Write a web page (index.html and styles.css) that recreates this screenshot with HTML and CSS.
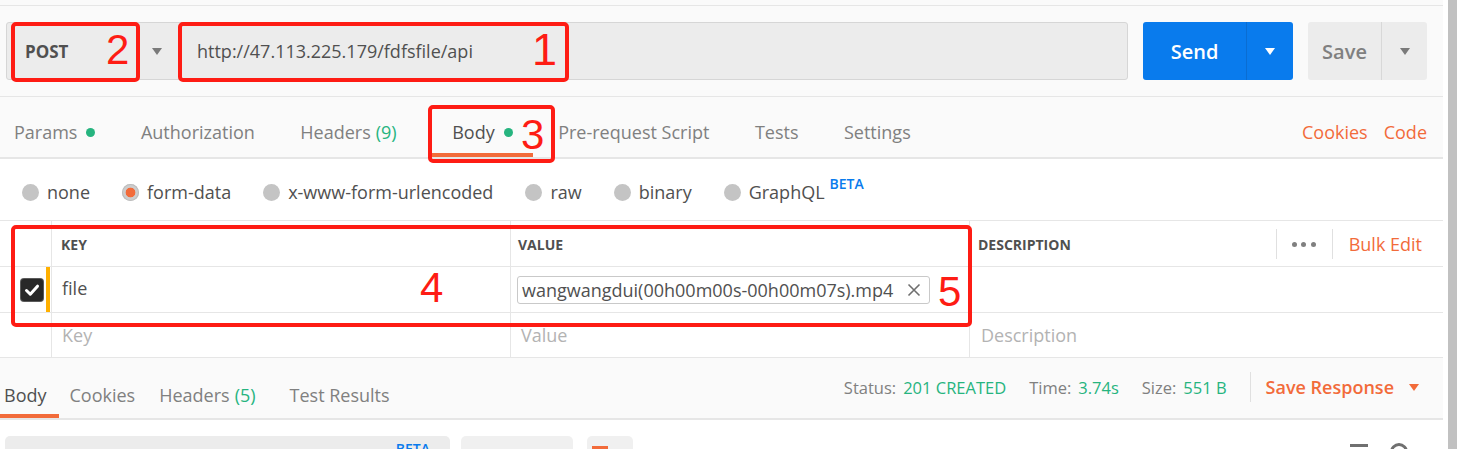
FILE: index.html
```html
<!DOCTYPE html>
<html>
<head>
<meta charset="utf-8">
<link rel="stylesheet" href="styles.css">
</head>
<body>
<div class="page">
  <div class="main">
    <div class="topgap"></div>
    <div class="reqbar">
      <div class="urlgroup">
        <div class="method"><span class="method-name">POST</span><span class="caret caret-gray"></span></div>
        <div class="url">http://47.113.225.179/fdfsfile/api</div>
      </div>
      <div class="send"><span class="send-label">Send</span><span class="send-drop"><span class="caret caret-white"></span></span></div>
      <div class="save"><span class="save-label">Save</span><span class="save-drop"><span class="caret caret-gray"></span></span></div>
    </div>

    <div class="tabs">
      <span class="tab">Params<i class="dot"></i></span>
      <span class="tab">Authorization</span>
      <span class="tab">Headers <span class="count">(9)</span></span>
      <span class="tab active">Body<i class="dot"></i></span>
      <span class="tab">Pre-request Script</span>
      <span class="tab">Tests</span>
      <span class="tab">Settings</span>
      <span class="tab-links"><span class="link">Cookies</span><span class="link">Code</span></span>
    </div>

    <div class="bodytypes">
      <span class="opt"><i class="radio"></i>none</span>
      <span class="opt"><i class="radio selected"></i>form-data</span>
      <span class="opt"><i class="radio"></i>x-www-form-urlencoded</span>
      <span class="opt"><i class="radio"></i>raw</span>
      <span class="opt"><i class="radio"></i>binary</span>
      <span class="opt"><i class="radio"></i>GraphQL<sup class="beta">BETA</sup></span>
    </div>

    <div class="grid head">
      <div class="cell c0"></div>
      <div class="cell c1 hd">KEY</div>
      <div class="cell c2 hd">VALUE</div>
      <div class="cell c3 hd">DESCRIPTION
        <span class="hd-tools">
          <span class="vdiv"></span>
          <span class="more"><i></i><i></i><i></i></span>
          <span class="vdiv"></span>
          <span class="bulk">Bulk Edit</span>
        </span>
      </div>
    </div>
    <div class="grid row">
      <div class="cell c0">
        <span class="check"><svg width="22" height="22" viewBox="0 0 22 22"><path d="M5.5 11.5 L9.3 15.2 L16.5 7.2" fill="none" stroke="#fff" stroke-width="3" stroke-linecap="round" stroke-linejoin="round"/></svg></span>
        <span class="flag"></span>
      </div>
      <div class="cell c1 val">file</div>
      <div class="cell c2">
        <span class="chip"><span class="chip-text">wangwangdui(00h00m00s-00h00m07s).mp4</span>
          <svg class="chip-x" width="14" height="14" viewBox="0 0 14 14"><path d="M1.5 1.5 L12.5 12.5 M12.5 1.5 L1.5 12.5" stroke="#6f6f6f" stroke-width="1.6" fill="none"/></svg>
        </span>
      </div>
      <div class="cell c3"></div>
    </div>
    <div class="grid row">
      <div class="cell c0"></div>
      <div class="cell c1 ph">Key</div>
      <div class="cell c2 ph">Value</div>
      <div class="cell c3 ph">Description</div>
    </div>

    <div class="restabs">
      <div class="rtabs">
        <span class="rtab active">Body</span>
        <span class="rtab rt-cookies">Cookies</span>
        <span class="rtab rt-headers">Headers <span class="count">(5)</span></span>
        <span class="rtab rt-tests">Test Results</span>
      </div>
      <div class="rstats">
        <span class="stat">Status:<b>201 CREATED</b></span>
        <span class="stat">Time:<b>3.74s</b></span>
        <span class="stat">Size:<b>551 B</b></span>
        <span class="rdiv"></span>
        <span class="saveresp">Save Response</span>
        <span class="caret caret-orange"></span>
      </div>
    </div>

    <div class="below">
      <div class="bx bx1"><span class="bx-beta">BETA</span></div>
      <div class="bx bx2"></div>
      <div class="bx bx3"><span class="bx-mark"></span></div>
      <div class="below-icons">
        <span class="ic-lines"></span>
        <span class="ic-circle"></span>
      </div>
    </div>
  </div>
  <div class="scrollbar"></div>

  <div class="anno a-box1"></div>
  <div class="anno a-box2"></div>
  <div class="anno a-box3"></div>
  <div class="anno a-box4"></div>
  <span class="num n1">1</span>
  <span class="num n2">2</span>
  <span class="num n3">3</span>
  <span class="num n4">4</span>
  <span class="num n5">5</span>
</div>
</body>
</html>
```

FILE: styles.css
```css
* { box-sizing: border-box; }
html, body { margin: 0; padding: 0; background: #fff; }
body {
  font-family: "Open Sans", "Noto Sans", sans-serif;
  color: #505050;
  overflow: hidden;
}
.page {
  position: relative;
  display: flex;
  width: 1461px;
  height: 449px;
  overflow: hidden;
}
.main { width: 1443px; flex: none; }
.scrollbar { width: 9px; margin-left: 5px; background: #c1c1c1; height: 449px; flex: none; }

/* request bar */
.topgap { height: 6px; background: #fafafa; border-bottom: 1px solid #e6e6e6; }
.reqbar {
  height: 91px;
  padding: 16px 0 0 6px;
  display: flex;
  align-items: flex-start;
  gap: 15px;
  background: #fafafa;
  border-bottom: 1px solid #e6e6e6;
}
.urlgroup {
  width: 1122px;
  height: 58px;
  display: flex;
  align-items: center;
  background: #ececec;
  border: 1px solid #d6d6d6;
  border-radius: 3px;
}
.method {
  width: 172px;
  height: 100%;
  display: flex;
  align-items: center;
  padding-left: 18px;
  padding-right: 17px;
}
.method-name { font-weight: 700; font-size: 17px; color: #505050; }
.method .caret { margin-left: auto; }
.url { padding-left: 18px; font-size: 18px; color: #505050; }

.caret {
  display: inline-block;
  width: 0; height: 0;
  border-left: 5.5px solid transparent;
  border-right: 5.5px solid transparent;
  border-top: 7px solid #7a7a7a;
}
.caret-white { border-top-color: #fff; }
.caret-orange { border-top-color: #f26b3a; }

.send {
  width: 150px; height: 58px;
  display: flex;
  background: #097bed;
  border-radius: 3px;
}
.send-label {
  width: 104px;
  display: flex; align-items: center; justify-content: center;
  color: #fff; font-weight: 600; font-size: 20px;
  border-right: 1px solid #0a6dd2;
}
.send-drop { flex: 1; display: flex; align-items: center; justify-content: center; }
.save {
  width: 119px; height: 58px;
  display: flex;
  background: #ececec;
  border-radius: 3px;
}
.save-label {
  width: 74px;
  display: flex; align-items: center; justify-content: center;
  color: #808080; font-weight: 600; font-size: 20px;
  border-right: 1px solid #d8d8d8;
}
.save-drop { flex: 1; display: flex; align-items: center; justify-content: center; }

/* tabs */
.tabs {
  height: 62px;
  display: flex;
  align-items: stretch;
  gap: 45.5px;
  padding: 0 16px 0 14px;
  background: #fafafa;
  border-bottom: 2px solid #e6e6e6;
  font-size: 18px;
  color: #808080;
}
.tab {
  position: relative;
  display: flex;
  align-items: center;
  padding-top: 10px;
}
.tab.active { color: #505050; margin-left: 10px; }
.tab.active::after {
  content: "";
  position: absolute;
  left: -20px; right: -20px; bottom: 0;
  height: 4px;
  background: #f26b3a;
}
.dot { display: inline-block; width: 9px; height: 9px; border-radius: 50%; background: #26b47f; margin-left: 9px; }
.count { color: #26b47f; margin-left: 5px; }
.tab-links { margin-left: auto; display: flex; align-items: center; gap: 16px; padding-top: 10px; color: #f26b3a; }

/* body types */
.bodytypes {
  height: 62px;
  display: flex;
  align-items: center;
  gap: 32px;
  padding: 5px 0 0 22px;
  border-bottom: 1px solid #e6e6e6;
  font-size: 18px;
  color: #505050;
}
.opt { display: flex; align-items: center; position: relative; }
.radio { display: inline-block; width: 17px; height: 17px; border-radius: 50%; background: #c4c4c4; margin-right: 8px; }
.radio.selected { background: radial-gradient(circle, #f26b3a 0 4.5px, #cdcdcd 5.2px); box-shadow: inset 0 0 0 1px #bdbdbd; }
.beta {
  position: relative; top: -9px;
  margin-left: 5px;
  font-size: 14px; font-weight: 600;
  color: #097bed;
}

/* key-value table */
.grid {
  display: grid;
  grid-template-columns: 52px 459px 459px 1fr;
  border-bottom: 1px solid #e6e6e6;
}
.head { height: 46px; }
.row { height: 46px; }
.row + .row { height: 45px; }
.cell {
  display: flex;
  align-items: center;
  border-right: 1px solid #e6e6e6;
  padding-left: 9px;
  font-size: 18px;
}
.cell.c3 { border-right: 0; }
.cell.c0 { padding-left: 21px; }
.hd { font-size: 14px; font-weight: 700; color: #505050; padding-top: 1px; }
.c2.hd { padding-left: 7px; }
.c3.hd { padding-left: 8px; padding-right: 21px; }
.hd-tools { margin-left: auto; display: flex; align-items: center; font-size: 18px; font-weight: 400; }
.vdiv { width: 1px; height: 30px; background: #e0e0e0; }
.more { display: flex; gap: 4.5px; margin: 0 16px 0 15px; }
.more i { width: 5px; height: 5px; border-radius: 50%; background: #808080; display: block; }
.bulk { color: #f26b3a; margin-left: 16px; }

.check {
  width: 22px; height: 22px;
  border-radius: 3px;
  background: #282828;
  box-shadow: 0 0 0 1px #5a5a5a;
  display: flex;
}
.flag { width: 4px; align-self: stretch; margin: 0 0 0 3px; background: #ffb000; }
.val { padding-left: 10px; color: #505050; padding-bottom: 3px; }
.c2 { padding-left: 6px; }
.chip {
  width: 413px; height: 28px;
  display: flex; align-items: center;
  border: 1px solid #c9c9c9;
  border-radius: 3px;
  padding: 0 8px 0 4px;
  font-size: 18px;
  color: #505050;
  background: #fff;
  white-space: nowrap;
}
.chip-x { margin-left: auto; }
.ph { color: #b3b3b3; padding-left: 10px; }
.c2.ph { padding-left: 10px; }
.c3.ph { padding-left: 11px; }

/* response tabs */
.restabs {
  height: 62px;
  display: flex;
  align-items: stretch;
  background: #fafafa;
  border-bottom: 2px solid #e6e6e6;
}
.rtabs { display: flex; align-items: stretch; font-size: 18px; color: #808080; }
.rtab { display: flex; align-items: center; padding-top: 14px; position: relative; }
.rtab.active { color: #505050; padding-left: 4px; padding-right: 12px; }
.rtab.active::after { content: ""; position: absolute; left: 0; right: 0; bottom: 0; height: 4px; background: #f26b3a; }
.rt-cookies { margin-left: 11px; }
.rt-headers { margin-left: 24px; }
.rt-tests { margin-left: 34px; }
.rstats { margin-left: auto; display: flex; align-items: center; padding: 0 24px 2px 0; font-size: 16.5px; color: #808080; }
.stat b { font-weight: 400; color: #26b47f; margin-left: 7px; }
.stat + .stat { margin-left: 23px; }
.rdiv { width: 1px; height: 30px; background: #e0e0e0; margin: 0 15px 0 23px; }
.saveresp { color: #f26b3a; font-weight: 600; font-size: 18px; margin-right: 15px; }

/* below */
.below { height: 40px; padding: 16px 0 0 5px; display: flex; align-items: flex-start; }
.bx { height: 30px; border-radius: 5px; background: #ececec; flex: none; }
.bx1 { width: 445px; display: flex; justify-content: flex-end; padding: 3px 20px 0 0; }
.bx-beta { font-size: 14px; font-weight: 600; color: #097bed; }
.bx2 { width: 112px; margin-left: 11px; background: #f0f0f0; }
.bx3 { width: 46px; margin-left: 14px; background: #f0f0f0; padding: 10px 0 0 5px; }
.bx-mark { display: block; width: 16px; height: 8px; background: #f26b3a; }
.below-icons { margin-left: auto; display: flex; gap: 22px; padding: 8px 35px 0 0; }
.ic-lines { width: 18px; height: 14px; border-top: 3px solid #707070; }
.ic-circle { width: 18px; height: 18px; border: 3px solid #707070; border-radius: 50%; margin-top: -1px; }

/* red annotations over the screenshot */
.anno { position: absolute; border: 4px solid #fe1c14; border-radius: 5px; }
.a-box2 { left: 11px; top: 22px; width: 129px; height: 60px; }
.a-box1 { left: 178px; top: 22px; width: 391px; height: 60px; }
.a-box3 { left: 428px; top: 105px; width: 127px; height: 58px; }
.a-box4 { left: 11px; top: 225px; width: 961px; height: 102px; }
.num {
  position: absolute;
  font-family: "Liberation Sans", Arial, sans-serif;
  font-size: 42px;
  line-height: 1;
  color: #fe1c14;
}
.n1 { left: 532px; top: 27px; font-size: 45px; }
.n2 { left: 106px; top: 29px; }
.n3 { left: 521px; top: 114px; }
.n4 { left: 420px; top: 267px; }
.n5 { left: 938px; top: 271px; }
```
